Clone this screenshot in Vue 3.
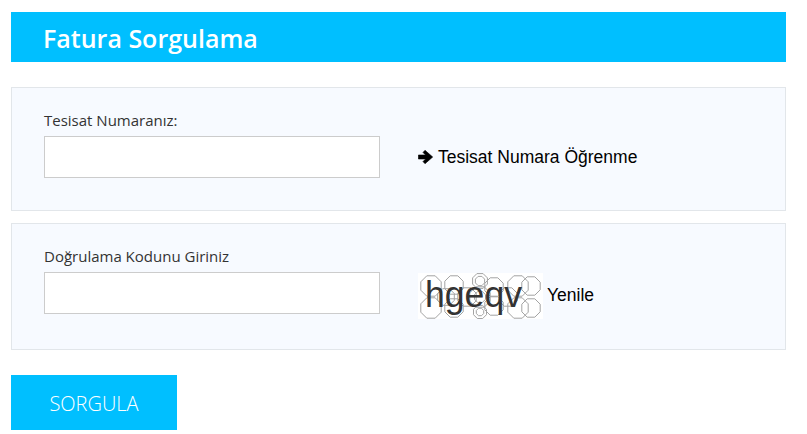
<script setup>
import { ref } from 'vue';

const tesisatNo = ref('');
const kod = ref('');

// Octagon rings of the captcha noise, as centre x, centre y, radius.
const rings = [
  [13, 13, 11], [13, 35, 11], [28, 24, 9], [36, 12, 10], [36, 35, 10], [49, 24, 10],
  [62, 8, 8], [62, 8, 5], [62, 24, 11], [62, 24, 6], [62, 39, 7], [62, 39, 4],
  [76, 14, 10], [76, 33, 10], [90, 24, 10], [100, 13, 11], [100, 35, 11],
  [113, 13, 10], [113, 35, 10],
];

const octagon = ([cx, cy, r]) => {
  const pts = [];
  for (let i = 0; i < 8; i++) {
    const a = Math.PI / 8 + (i * Math.PI) / 4;
    pts.push(`${(cx + r * Math.cos(a)).toFixed(1)},${(cy + r * Math.sin(a)).toFixed(1)}`);
  }
  return pts.join(' ');
};
</script>

<template>
  <div class="page">
    <h1 class="title">Fatura Sorgulama</h1>

    <form class="form" @submit.prevent>
      <section class="panel panel-first">
        <div class="field">
          <label for="tesisat">Tesisat Numaranız:</label>
          <input id="tesisat" v-model="tesisatNo" type="text" />
        </div>
        <a class="side-link" href="#">
          <svg class="arrow" viewBox="0 0 15 14" width="15" height="14">
            <path d="M0.4 5H7.6L5 2.4 7 0.3 14.7 7 7 13.7 5 11.6 7.6 9H0.4Z" fill="#000" stroke="#000" stroke-width="0.6" stroke-linejoin="round" />
          </svg>
          Tesisat Numara Öğrenme
        </a>
      </section>

      <section class="panel panel-second">
        <div class="field">
          <label for="kod">Doğrulama Kodunu Giriniz</label>
          <input id="kod" v-model="kod" type="text" />
        </div>
        <div class="captcha-row">
          <svg class="captcha" viewBox="0 0 125 46" width="125" height="46">
            <rect width="125" height="46" fill="#fff" />
            <polygon
              v-for="(ring, i) in rings"
              :key="i"
              :points="octagon(ring)"
              fill="none"
              stroke="#a3a3a3"
              stroke-width="1"
            />
            <text x="7" y="34" class="captcha-text" textLength="97" lengthAdjust="spacingAndGlyphs">hgeqv</text>
          </svg>
          <a class="refresh" href="#">Yenile</a>
        </div>
      </section>

      <button class="submit" type="submit">SORGULA</button>
    </form>
  </div>
</template>

<style scoped>
.page {
  width: 807px;
  height: 434px;
  padding: 12px 21px 0 11px;
  box-sizing: border-box;
  background: #fff;
  font-family: "Open Sans", sans-serif;
  overflow: hidden;
}
.title {
  margin: 0;
  height: 50px;
  padding-left: 32px;
  background: #00bfff;
  color: #fff;
  font-size: 25px;
  font-weight: 600;
  line-height: 53px;
}
.form {
  display: flex;
  flex-direction: column;
  align-items: flex-start;
  margin-top: 25px;
}
.panel {
  display: flex;
  align-items: flex-start;
  width: 100%;
  box-sizing: border-box;
  padding: 22px 32px 0;
  background: #f7faff;
  border: 1px solid #e2e6ea;
}
.panel-first {
  height: 124px;
}
.panel-second {
  height: 127px;
  margin-top: 12px;
}
.field {
  display: flex;
  flex-direction: column;
  width: 336px;
}
.field label {
  height: 26px;
  color: #333;
  font-size: 15px;
  line-height: 20px;
}
.field input {
  width: 100%;
  height: 42px;
  box-sizing: border-box;
  background: #fff;
  border: 1px solid #ccc;
  outline: none;
}
.side-link {
  display: flex;
  align-items: center;
  gap: 5px;
  margin: 36px 0 0 38px;
  color: #000;
  font-family: "Liberation Sans", Arial, sans-serif;
  font-size: 17.5px;
  line-height: 22px;
  text-decoration: none;
}
.captcha-row {
  display: flex;
  align-items: center;
  margin: 27px 0 0 38px;
}
.captcha {
  display: block;
}
.captcha-text {
  font-family: "Liberation Sans", Arial, sans-serif;
  font-size: 37px;
  fill: #333;
}
.refresh {
  margin: -2px 0 0 4px;
  color: #000;
  font-family: "Liberation Sans", Arial, sans-serif;
  font-size: 17.5px;
  line-height: 20px;
  text-decoration: none;
}
.submit {
  width: 166px;
  height: 55px;
  margin-top: 25px;
  padding: 2px 0 0;
  background: #00bfff;
  border: none;
  color: #fff;
  font-family: "Open Sans", sans-serif;
  font-size: 20px;
  font-weight: 300;
  cursor: pointer;
}
</style>
